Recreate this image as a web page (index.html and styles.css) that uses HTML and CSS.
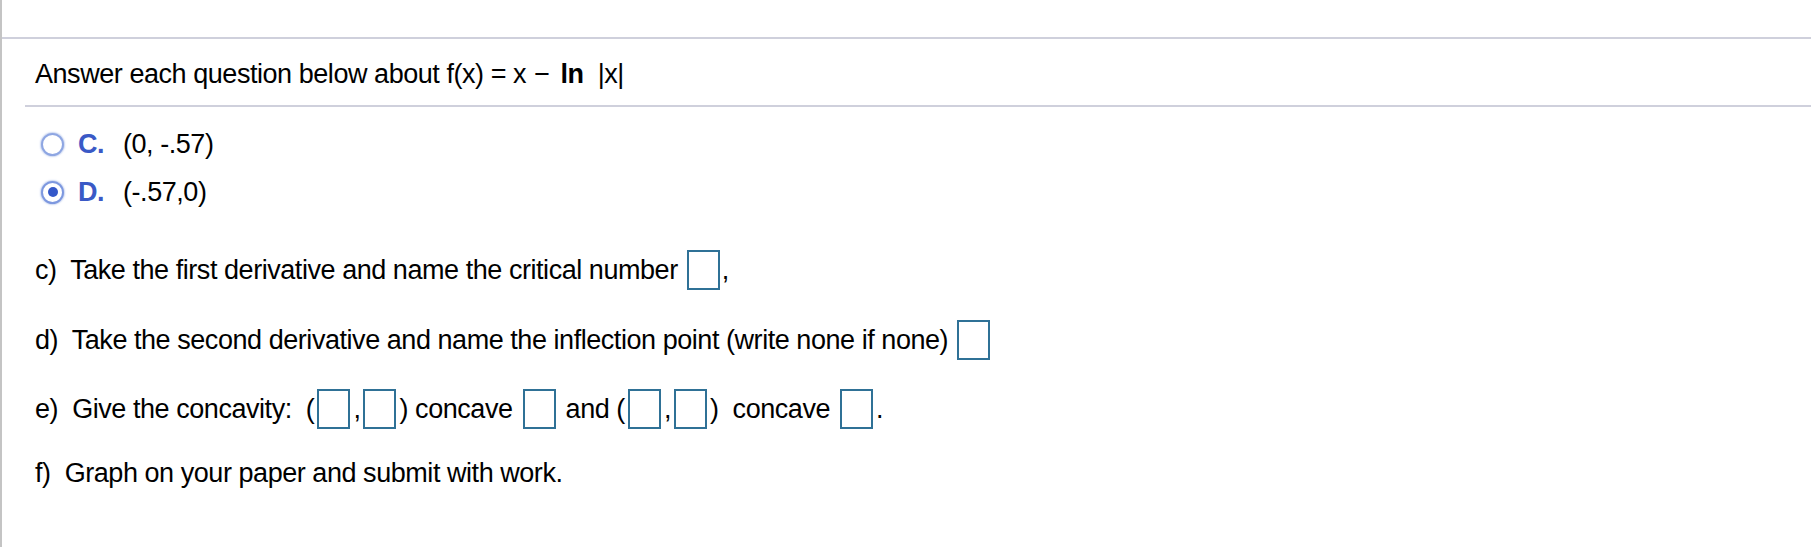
FILE: index.html
```html
<!DOCTYPE html>
<html>
<head>
<meta charset="utf-8">
<link rel="stylesheet" href="styles.css">
</head>
<body>
<div class="page">
  <div class="accent"></div>
  <div class="top-gap"></div>
  <div class="rule-full"></div>
  <div class="header">Answer each question below about f(x) = x <span class="minus">−</span> <b class="ln">ln</b>&nbsp; |x|</div>
  <div class="rule-inset"></div>
  <div class="options">
    <div class="option">
      <span class="radio"></span>
      <span class="letter">C.</span>
      <span class="value">(0, -.57)</span>
    </div>
    <div class="option">
      <span class="radio checked"></span>
      <span class="letter">D.</span>
      <span class="value">(-.57,0)</span>
    </div>
  </div>
  <div class="q q-c">c)&nbsp; Take the first derivative and name the critical number <span class="box"></span>,</div>
  <div class="q q-d">d)&nbsp; Take the second derivative and name the inflection point (write none if none) <span class="box"></span></div>
  <div class="q q-e">e)&nbsp; Give the concavity:&nbsp; (<span class="box"></span>,<span class="box"></span>) concave <span class="box"></span> and (<span class="box"></span>,<span class="box"></span>)&nbsp; concave <span class="box"></span>.</div>
  <div class="q q-f">f)&nbsp; Graph on your paper and submit with work.</div>
</div>
</body>
</html>
```
FILE: styles.css
```css
html, body {
  margin: 0;
  padding: 0;
  background: #ffffff;
}
.page {
  position: relative;
  width: 1811px;
  height: 547px;
  box-sizing: border-box;
  border-left: 2px solid #c4c4c4;
  font-family: "Liberation Sans", Arial, sans-serif;
  font-size: 27px;
  letter-spacing: -0.45px;
  color: #000;
  overflow: hidden;
}
.accent {
  position: absolute;
  left: -2px;
  top: 62px;
  width: 2px;
  height: 16px;
  background: #7d9ab8;
}
.top-gap {
  height: 37px;
}
.rule-full {
  height: 2px;
  background: #cfd0dc;
}
.header {
  height: 66px;
  line-height: 70px;
  padding-left: 33px;
}
.minus {
  margin: 0 1px;
}
.ln {
  margin-left: 3px;
}
.rule-inset {
  height: 2px;
  margin-left: 23px;
  background: #cfd0dc;
}
.options {
  display: flex;
  flex-direction: column;
  padding-top: 13px;
  padding-left: 39px;
}
.option {
  display: flex;
  align-items: center;
  height: 48px;
}
.radio {
  flex: none;
  width: 19px;
  height: 19px;
  border-radius: 50%;
  border: 2px solid #8ea6e2;
  box-shadow: 0 0 1.5px 1px rgba(120, 150, 220, 0.4);
  background: #fff;
  position: relative;
  margin-right: 14px;
}
.radio.checked {
  border-color: #7d98df;
}
.radio.checked::after {
  content: "";
  position: absolute;
  left: 4.5px;
  top: 4.5px;
  width: 10px;
  height: 10px;
  border-radius: 50%;
  background: #3458c9;
}
.letter {
  color: #3a59c6;
  font-weight: bold;
  width: 45px;
}
.q {
  padding-left: 33px;
  display: flex;
  align-items: center;
  white-space: pre;
}
.q-c {
  margin-top: 34px;
  height: 40px;
}
.q-d {
  margin-top: 30px;
  height: 40px;
}
.q-e {
  margin-top: 29px;
  height: 40px;
}
.q-f {
  margin-top: 24px;
  height: 40px;
}
.box {
  display: inline-block;
  width: 29px;
  height: 36px;
  border: 2px solid #2f7196;
  box-sizing: content-box;
  margin: 0 2px;
}
.q-e .box {
  margin: 0 3px;
}
```
